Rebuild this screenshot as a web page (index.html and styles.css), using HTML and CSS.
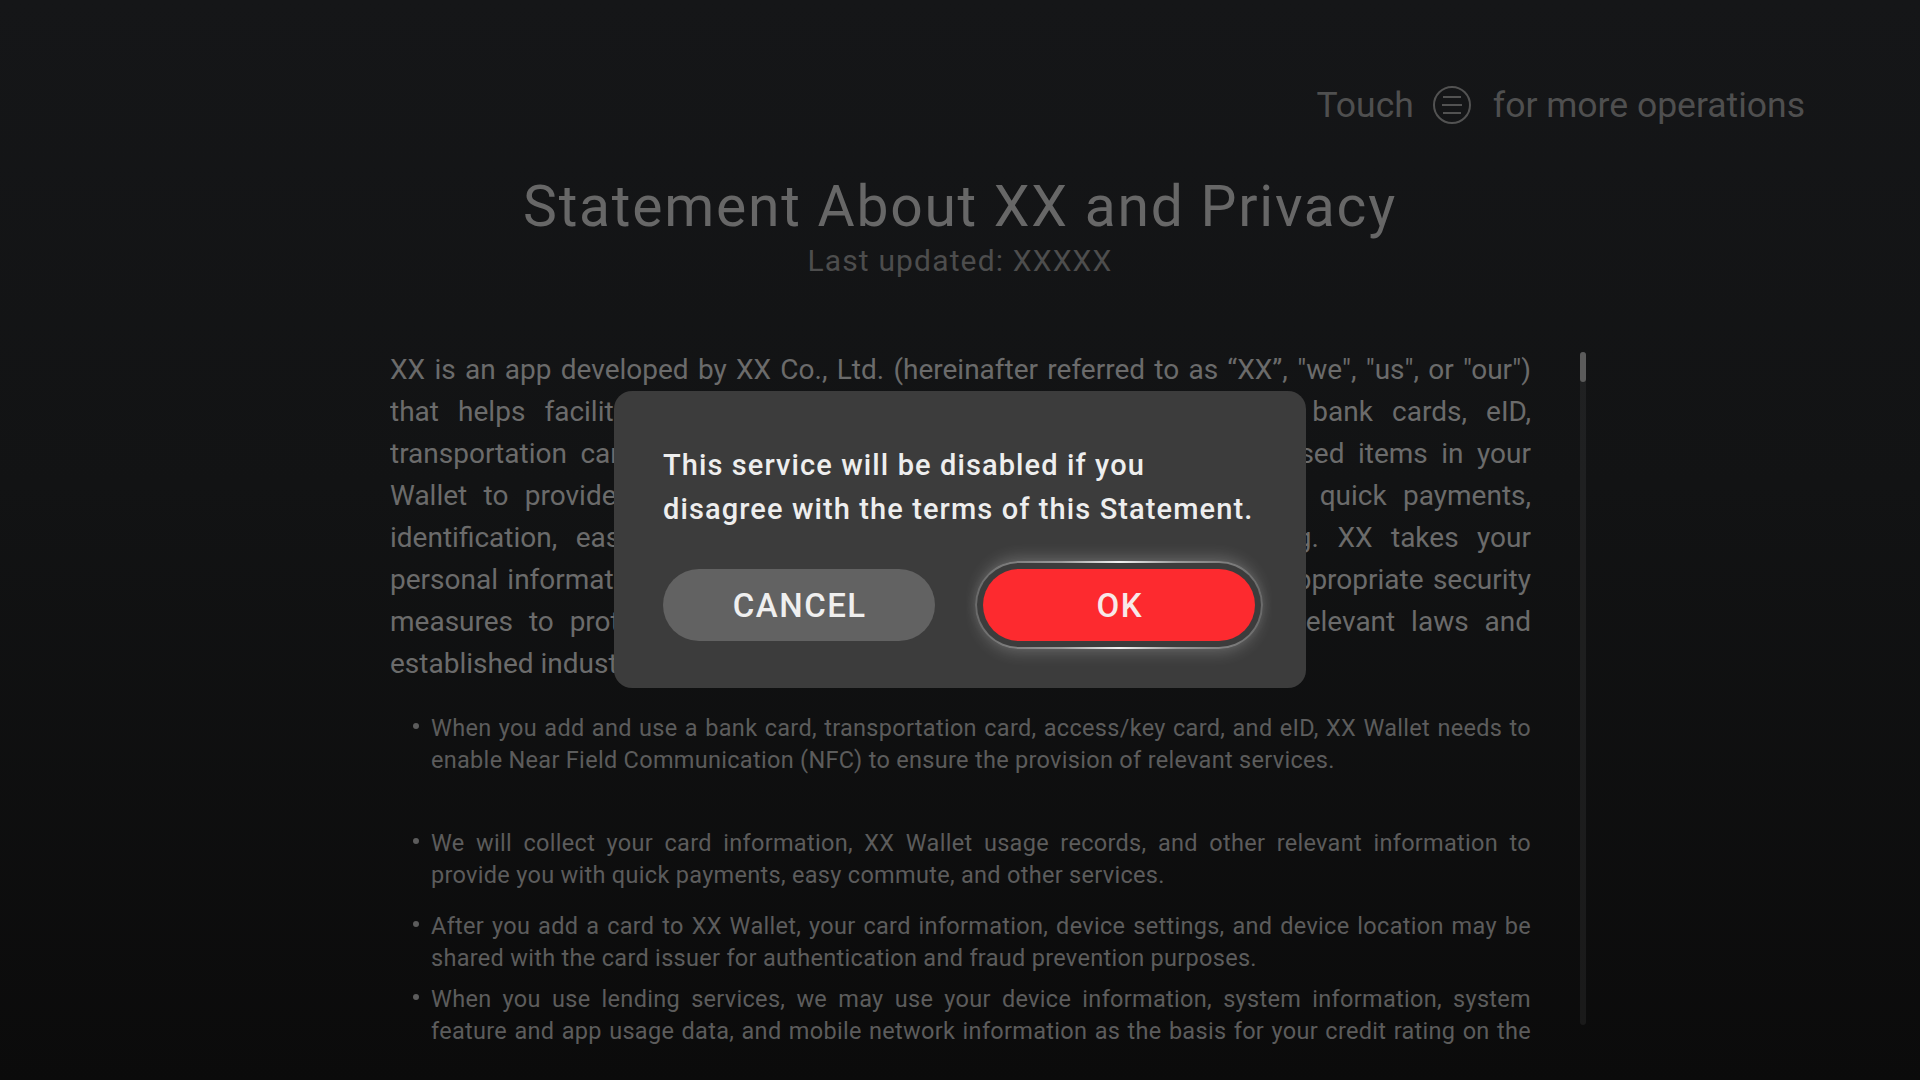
FILE: index.html
```html
<!DOCTYPE html>
<html lang="en">
<head>
<meta charset="utf-8">
<title>Statement About XX and Privacy</title>
<link rel="stylesheet" href="styles.css">
</head>
<body>
<div class="screen">
  <header class="topbar">
    <span>Touch</span>
    <svg class="menu-icon" width="38" height="38" viewBox="0 0 38 38" aria-hidden="true">
      <circle cx="19" cy="19" r="18" fill="none" stroke="currentColor" stroke-width="2"/>
      <line x1="10" y1="11" x2="28" y2="11" stroke="currentColor" stroke-width="2"/>
      <line x1="9" y1="19" x2="29" y2="19" stroke="currentColor" stroke-width="2"/>
      <line x1="10" y1="27" x2="28" y2="27" stroke="currentColor" stroke-width="2"/>
    </svg>
    <span>for more operations</span>
  </header>

  <h1 class="title">Statement About XX and Privacy</h1>
  <p class="updated">Last updated: XXXXX</p>

  <div class="content">
    <div class="doc">
      <p class="intro">
        <span class="ln">XX is an app developed by XX Co., Ltd. (hereinafter referred to as “XX”, "we", "us", or "our")</span>
        <span class="ln">that helps facilitate the management and use of items like your bank cards, eID,</span>
        <span class="ln">transportation cards, access/key cards, and all the other frequently used items in your</span>
        <span class="ln">Wallet to provide you with convenient and secure services such as quick payments,</span>
        <span class="ln">identification, easy commute, and smart contactless door unlocking. XX takes your</span>
        <span class="ln">personal information and privacy very seriously and has also adopted appropriate security</span>
        <span class="ln">measures to protect your personal information in accordance with relevant laws and</span>
        <span class="ln last">established industry standards.</span>
      </p>

      <ul class="bullets">
        <li class="item">
          <span class="dot"></span>
          <div class="btext">
            <span class="ln">When you add and use a bank card, transportation card, access/key card, and eID, XX Wallet needs to</span>
            <span class="ln last">enable Near Field Communication (NFC) to ensure the provision of relevant services.</span>
          </div>
        </li>
        <li class="item item-2">
          <span class="dot"></span>
          <div class="btext">
            <span class="ln">We will collect your card information, XX Wallet usage records, and other relevant information to</span>
            <span class="ln last">provide you with quick payments, easy commute, and other services.</span>
          </div>
        </li>
        <li class="item item-3">
          <span class="dot"></span>
          <div class="btext">
            <span class="ln">After you add a card to XX Wallet, your card information, device settings, and device location may be</span>
            <span class="ln last">shared with the card issuer for authentication and fraud prevention purposes.</span>
          </div>
        </li>
        <li class="item item-4">
          <span class="dot"></span>
          <div class="btext">
            <span class="ln">When you use lending services, we may use your device information, system information, system</span>
            <span class="ln">feature and app usage data, and mobile network information as the basis for your credit rating on the</span>
            <span class="ln last">lending platform.</span>
          </div>
        </li>
      </ul>
    </div>
    <div class="scrollbar"><div class="thumb"></div></div>
  </div>

  <div class="dialog" role="dialog">
    <p class="msg">This service will be disabled if you<br>disagree with the terms of this Statement.</p>
    <div class="actions">
      <button class="btn btn-cancel">CANCEL</button>
      <div class="focus-ring"><button class="btn btn-ok">OK</button></div>
    </div>
  </div>
</div>
</body>
</html>
```

FILE: styles.css
```css
* { box-sizing: border-box; }

html, body {
  margin: 0;
  padding: 0;
}

body {
  width: 1920px;
  height: 1080px;
  overflow: hidden;
  background: linear-gradient(180deg, #151618 0%, #121314 45%, #0b0b0b 100%);
  font-family: Roboto, "Noto Sans", "Liberation Sans", sans-serif;
}

.screen {
  position: relative;
  width: 1920px;
  height: 1080px;
}

.topbar {
  display: flex;
  justify-content: flex-end;
  align-items: center;
  padding: 83px 115px 0 0;
  height: 127px;
  font-size: 35.5px;
  line-height: 44px;
  color: #4f4f4f;
}

.menu-icon {
  display: block;
  margin: 0 22px 0 19px;
  color: #525252;
}

.title {
  margin: 46px 0 0;
  font-size: 57px;
  line-height: 68px;
  font-weight: 400;
  letter-spacing: 1.75px;
  color: #676767;
  text-align: center;
}

.updated {
  margin: 2px 0 0;
  font-size: 30px;
  line-height: 36px;
  letter-spacing: 1.15px;
  color: #4d4d4d;
  text-align: center;
}

.content {
  display: flex;
  gap: 49px;
  margin-top: 70px;
  padding-left: 390px;
}

.doc {
  width: 1141px;
  height: 700px;
  overflow: hidden;
}

.ln {
  display: block;
  text-align: justify;
  text-align-last: justify;
}

.ln.last {
  text-align-last: left;
}

.intro {
  margin: 0;
  font-size: 28px;
  line-height: 42px;
  color: #6b6b6b;
}

.bullets {
  list-style: none;
  margin: 27px 0 0;
  padding: 0;
  font-size: 23.5px;
  line-height: 32px;
  letter-spacing: 0.3px;
  color: #5c5c5c;
}

.item {
  display: flex;
  align-items: flex-start;
}

.item-2 { margin-top: 51px; }
.item-3 { margin-top: 19px; }
.item-4 { margin-top: 9px; }

.dot {
  flex: none;
  width: 6px;
  height: 6px;
  border-radius: 50%;
  background: #5c5c5c;
  margin: 11px 12px 0 23px;
}

.btext {
  flex: 1;
  min-width: 0;
}

.scrollbar {
  flex: none;
  width: 6px;
  height: 673px;
  margin-top: 3px;
  border-radius: 3px;
  background: rgba(255, 255, 255, 0.06);
}

.thumb {
  height: 30px;
  border-radius: 3px;
  background: #5b5b5b;
}

/* Modal dialog overlay */
.dialog {
  position: absolute;
  left: 614px;
  top: 391px;
  width: 692px;
  height: 297px;
  padding: 52px 43px 0 49px;
  background: #3c3c3c;
  border-radius: 18px;
}

.msg {
  margin: 0;
  font-size: 29px;
  line-height: 44px;
  font-weight: 500;
  letter-spacing: 1.1px;
  color: #eeeeee;
  white-space: nowrap;
}

.actions {
  display: flex;
  justify-content: space-between;
  align-items: center;
  margin-top: 30px;
}

.btn {
  display: flex;
  align-items: center;
  justify-content: center;
  width: 272px;
  height: 72px;
  padding: 0;
  border: none;
  border-radius: 36px;
  font-family: Roboto, "Noto Sans", "Liberation Sans", sans-serif;
  font-size: 33px;
  font-weight: 500;
  letter-spacing: 1.5px;
  text-indent: 1.5px;
}

.btn-cancel {
  background: #626262;
  color: #efefef;
}

.focus-ring {
  padding: 6px;
  border: 2px solid transparent;
  border-radius: 44px;
  background:
    linear-gradient(#3c3c3c, #3c3c3c) padding-box,
    linear-gradient(90deg, #6a6a6a 0%, #9a9a9a 30%, #f2f2f2 50%, #9a9a9a 70%, #6a6a6a 100%) border-box;
  box-shadow:
    0 -7px 16px -4px rgba(255, 255, 255, 0.22),
    0 7px 16px -4px rgba(255, 255, 255, 0.22);
}

.btn-ok {
  background: #fd2a2f;
  color: #f8e9e9;
}
```
